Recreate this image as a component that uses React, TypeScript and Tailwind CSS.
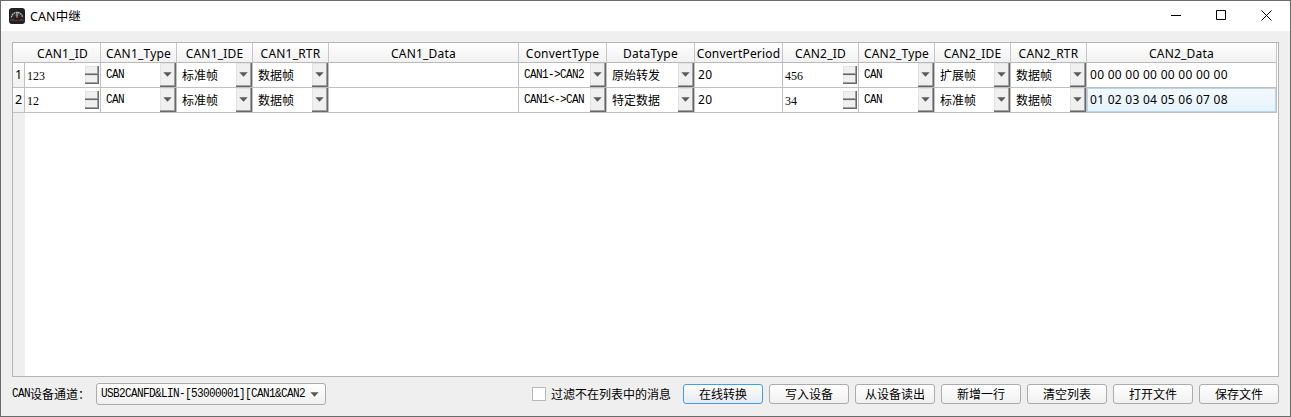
import React from "react";

const UI = "font-['Noto_Sans','Noto_Sans_CJK_SC',sans-serif]";
const HEI = "font-['Noto_Sans_CJK_SC',sans-serif] text-[12px] tracking-normal";
const MONO = "font-['Liberation_Mono','Noto_Sans_CJK_SC',monospace] text-[11px] tracking-[-0.6px]";
const RAISED =
  "border-b border-r border-[#696969] bg-[#f0f0f0] shadow-[inset_-1px_-1px_0_#a0a0a0,inset_1px_1px_0_#e3e3e3]";

const headers = [
  "CAN1_ID", "CAN1_Type", "CAN1_IDE", "CAN1_RTR", "CAN1_Data", "ConvertType", "DataType",
  "ConvertPeriod", "CAN2_ID", "CAN2_Type", "CAN2_IDE", "CAN2_RTR", "CAN2_Data",
];

const rows = [
  ["123", "CAN", "标准帧", "数据帧", "", "CAN1->CAN2", "原始转发", "20", "456", "CAN", "扩展帧", "数据帧", "00 00 00 00 00 00 00 00"],
  ["12", "CAN", "标准帧", "数据帧", "", "CAN1<->CAN", "特定数据", "20", "34", "CAN", "标准帧", "数据帧", "01 02 03 04 05 06 07 08"],
];

const GRID = "grid grid-cols-[12px_76px_76px_76px_76px_190px_88px_88px_88px_76px_76px_76px_76px_190px]";

function Arrow() {
  return (
    <svg width="9" height="5" viewBox="0 0 9 5" className="block">
      <path d="M.3 .3h8.4L4.5 4.7z" fill="#5a5a5a" />
    </svg>
  );
}

function Spin({ value }: { value: string }) {
  return (
    <div className="flex h-6 items-center justify-between pl-[2px] pr-[1px]">
      <span className="pt-px font-['Liberation_Serif',serif] text-[12px]">{value}</span>
      <div className="flex w-[14px] flex-col">
        <div className={`h-[9px] ${RAISED}`} />
        <div className={`h-[9px] ${RAISED}`} />
      </div>
    </div>
  );
}

function Combo({ value, mono }: { value: string; mono?: boolean }) {
  return (
    <div className="flex h-6 items-center justify-between pl-[5px]">
      <span className={`whitespace-nowrap ${mono ? `scale-y-115 ${MONO}` : HEI}`}>{value}</span>
      <div className={`flex h-6 w-4 shrink-0 items-center justify-center ${RAISED}`}>
        <Arrow />
      </div>
    </div>
  );
}

function Cell({ col, value, selected }: { col: number; value: string; selected: boolean }) {
  let body: React.ReactNode = null;
  if (col === 0 || col === 8) body = <Spin value={value} />;
  else if ([1, 5, 9].includes(col)) body = <Combo value={value} mono />;
  else if ([2, 3, 6, 10, 11].includes(col)) body = <Combo value={value} />;
  else
    body = (
      <div
        className={`flex h-6 items-center whitespace-pre text-[12px] tracking-[0.27px] ${selected ? "border border-[#b8d6eb] bg-linear-to-b from-[#f3f9fe] to-[#e6f3fd] pl-[2px]" : "pl-[3px]"}`}
      >
        {value}
      </div>
    );
  return <div className="h-[25px] border-b border-r border-[#c0c0c0] bg-white">{body}</div>;
}

function PushButton({ label, focused }: { label: string; focused?: boolean }) {
  return (
    <button
      className={`flex h-5 w-20 items-center justify-center rounded-[3px] border ${HEI} ${focused ? "border-[#3fa0ee] bg-linear-to-b from-[#fdfdfe] to-[#e6ebf2]" : "border-[#ababab] bg-linear-to-b from-white to-[#f0f0f0]"}`}
    >
      {label}
    </button>
  );
}

function AppIcon() {
  return (
    <svg width="16" height="16" viewBox="0 0 16 16">
      <rect width="16" height="16" rx="3" fill="#222021" />
      <path d="M2.3 9.5A5.8 6.3 0 0 1 13.7 9.5" fill="none" stroke="#b5b5b5" strokeWidth="1.4" strokeDasharray="1.8 .5" />
      <path d="M4.8 8.5A3.6 3.6 0 0 1 11.2 8.5" fill="none" stroke="#555" strokeWidth=".8" />
      <path d="M8 4v5" stroke="#ddd" strokeWidth="1" />
      <circle cx="8" cy="9" r="1.1" fill="#c44" />
      <path d="M1.5 12.5q2-2 4 0M10.5 12.5q2-2 4 0" fill="none" stroke="#666" />
      <path d="M6.5 12.5h3" stroke="#444" />
    </svg>
  );
}

export default function App() {
  return (
    <div className={`flex h-[417px] w-[1291px] flex-col border border-[#6b6b6b] bg-[#efefef] text-black ${UI}`}>
      <header className="flex h-[30px] shrink-0 items-center justify-between bg-white pl-2">
        <div className="flex items-center gap-[5px]">
          <AppIcon />
          <h1 className="pt-px text-[12.5px] leading-4 tracking-[0.1px]">CAN中继</h1>
        </div>
        <svg width="138" height="30" viewBox="0 0 138 30" fill="none" stroke="#000" className="block">
          <path d="M19 14.5h10" />
          <path d="M64.5 9.5h9v9h-9z" />
          <path d="M109.5 9.5l10 10M119.5 9.5l-10 10" />
        </svg>
      </header>

      <main className="ml-[11px] mt-[11px] h-[335px] w-[1267px] shrink-0 border border-[#b4b4b4] bg-white">
        <div className={`${GRID} h-5 w-[1264px]`}>
          <div className="border-b border-[#b9b9b9] bg-linear-to-b from-white to-[#f1f1f1]" />
          {headers.map((h) => (
            <div
              key={h}
              className="flex items-center justify-center whitespace-nowrap border-b border-r border-b-[#b9b9b9] border-r-[#c6c6c6] bg-linear-to-b from-white to-[#f1f1f1] pt-[2px] text-[12px] leading-none tracking-[0.2px]"
            >
              {h}
            </div>
          ))}
        </div>
        {rows.map((row, r) => (
          <div key={r} className={`${GRID} w-[1264px]`}>
            <div className="flex items-center justify-center border-b border-r border-[#c0c0c0] bg-linear-to-b from-white to-[#f1f1f1] pt-px text-[12.5px]">
              {r + 1}
            </div>
            {row.map((v, c) => (
              <Cell key={c} col={c} value={v} selected={r === 1 && c === 12} />
            ))}
          </div>
        ))}
        <div className="h-[263px] w-3 bg-[#efefef]" />
      </main>

      <footer className="ml-[11px] mt-[6px] flex h-[22px] w-[1267px] items-center">
        <span className="flex w-[84px] items-center whitespace-nowrap">
          <span className={`scale-y-115 ${MONO}`}>CAN</span>
          <span className={HEI}>设备通道：</span>
        </span>
        <div className="flex h-[22px] w-[230px] items-center justify-between rounded-[3px] border border-[#ababab] bg-linear-to-b from-white to-[#f0f0f0] pl-1 pr-[6px]">
          <span className={`w-[205px] scale-y-115 overflow-hidden whitespace-nowrap ${MONO}`}>
            USB2CANFD&amp;LIN-[53000001][CAN1&amp;CAN2
          </span>
          <Arrow />
        </div>
        <label className={`ml-auto mr-3 flex items-center gap-[5px] ${HEI}`}>
          <span className="size-[14px] border border-[#b9b9b9] bg-white" />
          过滤不在列表中的消息
        </label>
        <div className="flex gap-[6px]">
          <PushButton label="在线转换" focused />
          <PushButton label="写入设备" />
          <PushButton label="从设备读出" />
          <PushButton label="新增一行" />
          <PushButton label="清空列表" />
          <PushButton label="打开文件" />
          <PushButton label="保存文件" />
        </div>
      </footer>
    </div>
  );
}
